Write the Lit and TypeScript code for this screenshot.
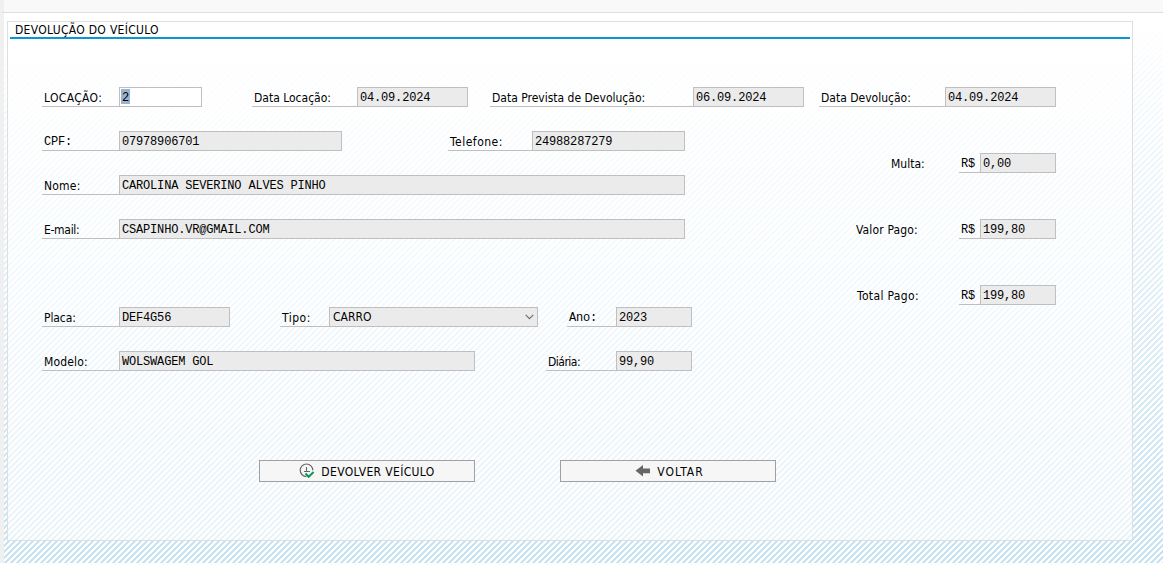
import { LitElement, html, css } from "lit";
import { customElement } from "lit/decorators.js";

interface Field {
  label: string;
  ls?: number;
  mono?: boolean;
  gap: number;
  lw: number;
  value: string;
  w: number;
  kind?: "edit" | "select";
}

const dates: Field[] = [
  { label: "LOCAÇÃO:", ls: 0.35, gap: 0, lw: 77, value: "2", w: 83, kind: "edit" },
  { label: "Data Locação:", gap: 50, lw: 105, value: "04.09.2024", w: 111 },
  { label: "Data Prevista de Devolução:", gap: 22, lw: 203, value: "06.09.2024", w: 111 },
  { label: "Data Devolução:", gap: 15, lw: 126, value: "04.09.2024", w: 111 },
];

const client: Field[][] = [
  [
    { label: "CPF:", mono: true, gap: 0, lw: 77, value: "07978906701", w: 223 },
    { label: "Telefone:", ls: 0.5, gap: 106, lw: 84, value: "24988287279", w: 153 },
  ],
  [{ label: "Nome:", ls: 0.2, gap: 0, lw: 77, value: "CAROLINA SEVERINO ALVES PINHO", w: 566 }],
  [{ label: "E-mail:", ls: -0.3, gap: 0, lw: 77, value: "CSAPINHO.VR@GMAIL.COM", w: 566 }],
];

const vehicle: Field[][] = [
  [
    { label: "Placa:", ls: -0.1, gap: 0, lw: 77, value: "DEF4G56", w: 111 },
    { label: "Tipo:", ls: 0.5, gap: 50, lw: 49, value: "CARRO", w: 209, kind: "select" },
    { label: "Ano:", mono: true, gap: 29, lw: 49, value: "2023", w: 76 },
  ],
  [
    { label: "Modelo:", ls: 0.15, gap: 0, lw: 77, value: "WOLSWAGEM GOL", w: 356 },
    { label: "Diária:", ls: -0.5, gap: 71, lw: 70, value: "99,90", w: 76 },
  ],
];

const totals = [
  { label: "Multa:", x: 34, ls: 0, value: "0,00" },
  { label: "Valor Pago:", x: -1, ls: 0.15, value: "199,80" },
  { label: "Total Pago:", x: 0, ls: 0.35, value: "199,80" },
];

@customElement("app-root")
export class AppRoot extends LitElement {
  static styles = css`
    :host {
      display: block;
      box-sizing: border-box;
      width: 1163px;
      height: 563px;
      overflow: hidden;
      background: #fff;
      color: #000;
      font: 12px/20px "DejaVu Sans Condensed", "DejaVu Sans", sans-serif;
      font-stretch: condensed;
    }
    * { box-sizing: border-box; }
    .frame { display: flex; flex-direction: column; height: 563px; }
    .toolbar { flex: none; height: 13px; background: #f9f9f9; border-bottom: 1px solid #dedede; border-left: 4px solid #f0f0f0; }
    .work {
      flex: 1;
      border-left: 4px solid #f0f0f0;
      padding: 8px 0 0 3px;
      background:
        linear-gradient(to bottom, #fff 0%, rgba(255,255,255,.85) 15%, rgba(255,255,255,.1) 100%),
        url("data:image/svg+xml,%3Csvg xmlns='http://www.w3.org/2000/svg' width='6' height='6' shape-rendering='crispEdges'%3E%3Cpath fill='%23c0dff1' d='M3 0h3v1h-3zM2 1h3v1h-3zM1 2h3v1h-3zM0 3h3v1h-3zM0 4h2v1h-2zM5 4h1v1h-1zM0 5h1v1h-1zM4 5h2v1h-2z'/%3E%3C/svg%3E");
    }
    .panel {
      width: 1126px;
      height: 520px;
      border: 1px solid #dfdfdf;
      background: rgba(255, 255, 255, .6);
      padding: 0 2px;
    }
    .title { height: 17px; line-height: 16px; padding-left: 5px; letter-spacing: .3px; border-bottom: 2px solid #0a96d2; white-space: nowrap; }
    .body { padding: 48px 0 0 32px; }
    .row { display: flex; height: 20px; margin-bottom: 24px; }
    .lbl { flex: none; border-bottom: 1px solid #bfbfbf; padding-left: 2px; line-height: 22px; white-space: pre; }
    .mono, .val { font-family: "Liberation Mono", monospace; font-size: 12px; letter-spacing: -.18px; }
    .val { flex: none; border: 1px solid #bfbfbf; background: #ebebeb; padding-left: 2px; line-height: 20px; white-space: pre; overflow: hidden; }
    .edit { background: #fff; padding-top: 1px; line-height: 16px; }
    .sel { display: inline-block; height: 15px; padding: 0 1px; margin-left: -1px; background: #99b4d1; line-height: 18px; vertical-align: top; }
    .select {
      display: flex; align-items: center; justify-content: space-between; padding: 0 3px;
      font: inherit; line-height: 18px; letter-spacing: 0;
    }
    .cols { display: flex; }
    .left { width: 812px; }
    .spacer { height: 44px; }
    .right { padding-top: 22px; }
    .total { display: flex; height: 20px; margin-bottom: 46px; }
    .cap { width: 105px; line-height: 22px; white-space: nowrap; }
    .cur { width: 21px; }
    .actions { display: flex; gap: 85px; padding: 65px 0 0 217px; }
    .btn {
      width: 216px; height: 22px; border: 1px solid #a0a0a0; background: #f6f6f6; color: #000;
      font: inherit; line-height: 22px; padding: 0; display: flex; align-items: center; justify-content: center; gap: 6px;
    }
    .back { padding-left: 3px; }
    .t1 { letter-spacing: .36px; height: 20px; }
    .t2 { letter-spacing: .95px; height: 20px; }
    svg { flex: none; display: block; }
  `;

  private label(f: Field) {
    return f.mono
      ? html`<span class="lbl mono" style="width:${f.lw}px;margin-left:${f.gap}px">${f.label}</span>`
      : html`<span class="lbl" style="width:${f.lw}px;margin-left:${f.gap}px;letter-spacing:${f.ls ?? 0}px">${f.label}</span>`;
  }

  private value(f: Field) {
    if (f.kind === "edit")
      return html`<span class="val edit" style="width:${f.w}px"><span class="sel">${f.value}</span></span>`;
    if (f.kind === "select")
      return html`<span class="val select" style="width:${f.w}px"><span>${f.value}</span
        ><svg width="9" height="6" viewBox="0 0 9 6"><path d="M.7 .8L4.5 4.6L8.3 .8" fill="none" stroke="#707070" stroke-width="1.2" /></svg></span>`;
    return html`<span class="val" style="width:${f.w}px">${f.value}</span>`;
  }

  private row(fields: Field[]) {
    return html`<div class="row">${fields.map((f) => html`${this.label(f)}${this.value(f)}`)}</div>`;
  }

  render() {
    return html`
      <div class="frame">
        <div class="toolbar"></div>
        <div class="work">
          <section class="panel">
            <div class="title">DEVOLUÇÃO DO VEÍCULO</div>
            <div class="body">
              ${this.row(dates)}
              <div class="cols">
                <div class="left">
                  ${client.map((r) => this.row(r))}
                  <div class="spacer"></div>
                  ${vehicle.map((r) => this.row(r))}
                </div>
                <div class="right">
                  ${totals.map(
                    (t) => html`<div class="total">
                      <span class="cap" style="padding-left:${t.x + 3}px;letter-spacing:${t.ls}px">${t.label}</span
                      ><span class="lbl mono cur">R$</span><span class="val" style="width:76px">${t.value}</span>
                    </div>`
                  )}
                </div>
              </div>
              <div class="actions">
                <button class="btn">
                  <svg width="16" height="16" viewBox="0 0 16 16" fill="none">
                    <path d="M7.5 13.6A6.3 6.3 0 1 1 13.8 7.3" stroke="#666" stroke-width="1.2" />
                    <path d="M7.5 4v4.5M5 8.5h6" stroke="#666" stroke-width="1.1" />
                    <path d="M6.5 10.5l3.2 3.3L14.6 9" stroke="#0b9a58" stroke-width="2" />
                  </svg>
                  <span class="t1">DEVOLVER VEÍCULO</span>
                </button>
                <button class="btn back">
                  <svg width="16" height="16" viewBox="0 0 16 16"><path d="M.5 7.7L8 2v3.4h7v4.8H8v3.3z" fill="#666" /></svg>
                  <span class="t2">VOLTAR</span>
                </button>
              </div>
            </div>
          </section>
        </div>
      </div>
    `;
  }
}
